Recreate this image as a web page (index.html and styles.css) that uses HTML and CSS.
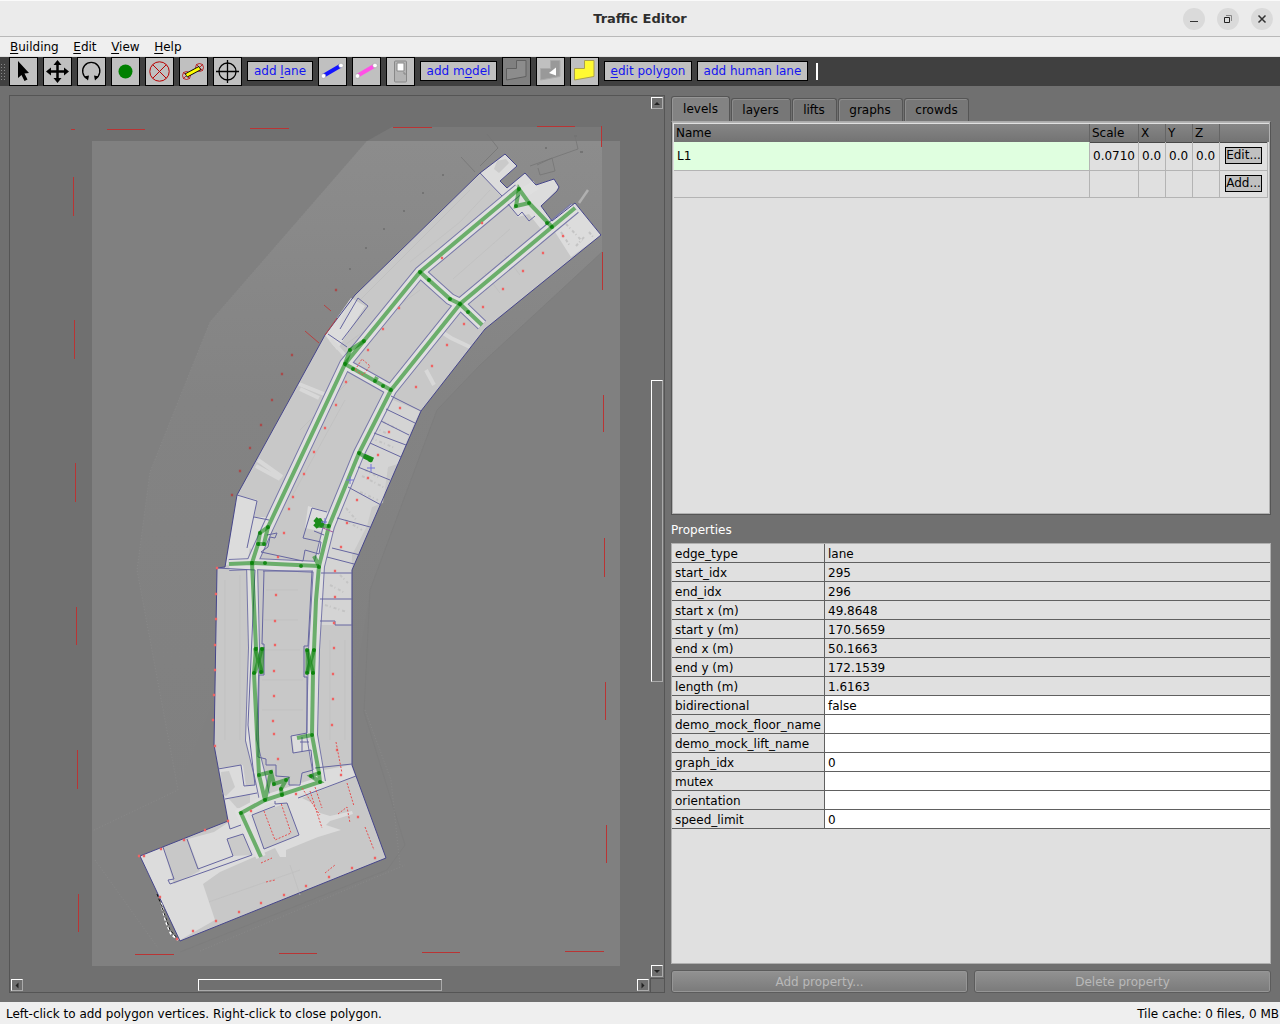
FILE: index.html
```html
<!DOCTYPE html>
<html lang="en">
<head>
<meta charset="utf-8">
<title>Traffic Editor</title>
<link rel="stylesheet" href="styles.css">
</head>
<body>
<header class="titlebar">
  <h1>Traffic Editor</h1>
  <div class="winbtns">
    <span><svg width="22" height="22"><path d="M7 13.5h8" stroke="#333"/></svg></span>
    <span><svg width="22" height="22" fill="none"><path d="M7.5 9.500h5v5h-5z" stroke="#222"/><path d="M9 7.500h5.500v5.500" stroke="#888"/></svg></span>
    <span><svg width="22" height="22"><path d="M7.500 7.500l7 7m0-7l-7 7" stroke="#333" stroke-width="1.500"/></svg></span>
  </div>
</header>
<nav class="menu"><span><u>B</u>uilding</span><span><u>E</u>dit</span><span><u>V</u>iew</span><span><u>H</u>elp</span></nav>
<div class="toolbar">
  <i class="grip"></i>
  <button class="tool"><svg viewBox="0 0 29 29"><path d="M9 4V21l3.500-3 3 6 3-1.500-3-6 4.500-.5z" fill="#000"/></svg></button>
  <button class="tool"><svg viewBox="0 0 29 29"><path d="M14.500 6v17M6 14.500h17" stroke="#000" stroke-width="2.500"/><path d="M14.500 3l4 5h-8zM14.500 26l4-5h-8zM3 14.500l5-4v8zM26 14.500l-5-4v8z"/></svg></button>
  <button class="tool"><svg viewBox="0 0 29 29"><path d="M10 21.500A8.600 8.600 0 1 1 18.500 21.500" fill="none" stroke="#000" stroke-width="1.300"/><path d="M7 19.500l5-1-1 5zM22 19.500l-5-1 1 5z"/></svg></button>
  <button class="tool"><svg viewBox="0 0 29 29"><circle cx="14.500" cy="14.500" r="7" fill="#008000"/></svg></button>
  <button class="tool"><svg viewBox="0 0 29 29" fill="none" stroke="#b80000"><circle cx="14.500" cy="14.500" r="9.700"/><path d="M7.700 7.700l13.600 13.600m0-13.600L7.700 21.300"/></svg></button>
  <button class="tool"><svg viewBox="0 0 29 29"><g fill="none" stroke="#b80000" stroke-width=".8"><circle cx="7.500" cy="18.500" r="4"/><circle cx="20.500" cy="10.500" r="4"/><path d="M4.500 15.500l6 6m0-6l-6 6M17.500 7.500l6 6m0-6l-6 6"/></g><path d="M7 18.500L21 11" stroke="#000" stroke-width="4.500"/><path d="M7.500 18.200L20.500 11.300" stroke="#ff0" stroke-width="3"/></svg></button>
  <button class="tool"><svg viewBox="0 0 29 29" fill="none" stroke="#000" stroke-width="1.300"><circle cx="14.500" cy="14.500" r="8.500"/><path d="M14.500 3v23M3 14.500h23"/></svg></button>
  <button class="txt t1">add <u>l</u>ane</button>
  <button class="tool"><svg viewBox="0 0 29 29"><path d="M5 19L23 8.500" stroke="#1414ff" stroke-width="4"/><g fill="#fff" stroke="#999" stroke-width=".5"><circle cx="5.500" cy="19" r="2.300"/><circle cx="23" cy="8.500" r="2.300"/></g></svg></button>
  <button class="tool"><svg viewBox="0 0 29 29"><path d="M5 19L23 8.500" stroke="#ff50e6" stroke-width="4"/><g fill="#fff" stroke="#999" stroke-width=".5"><circle cx="5.500" cy="19" r="2.300"/><circle cx="23" cy="8.500" r="2.300"/></g></svg></button>
  <button class="tool"><svg viewBox="0 0 29 29" stroke="#888"><rect x="8.500" y="4" width="12" height="21" rx="1" fill="#b4b4b4"/><path d="M11 6h7v8h-7z" fill="#fff"/><path d="M17 16h2v2" fill="none"/></svg></button>
  <button class="txt t2">add m<u>o</u>del</button>
  <button class="tool on"><svg viewBox="0 0 29 29"><path d="M4.500 11.500h10v-8h9.500v16L4.500 23z" fill="#8c8c8c" stroke="#606060"/></svg></button>
  <button class="tool"><svg viewBox="0 0 29 29"><path d="M4.500 11.500h10v-8h9.500v16L4.500 23z" fill="#999" stroke="#aaa"/><path d="M13 16l7-5.500v8z" fill="#fff"/></svg></button>
  <button class="tool"><svg viewBox="0 0 29 29"><path d="M4.500 11.500h10v-8h9.500v16L4.500 23z" fill="#fffa32" stroke="#aaa050"/></svg></button>
  <button class="txt t3"><u>e</u>dit polygon</button>
  <button class="txt t4">add human lane</button>
  <i class="caret"></i>
</div>
<main>
  <section class="view">
    <svg class="map" width="640" height="882" viewBox="10 96 640 882">
      <defs>
        <linearGradient id="shade" x1="0" y1="0" x2="0" y2="1"><stop offset="0" stop-color="#8c8c8c"/><stop offset=".4" stop-color="#838383"/><stop offset="1" stop-color="#808080"/></linearGradient>
      </defs>
      <path d="M92 141H620V966H92z" fill="#808080"/>
      <path class="site" d="M367 141L392 127H602V141z"/>
      <path fill="url(#shade)" d="M367 141H602V252L480 365 437 410 370 590 352 700 214 700 178 790 137 570 150 472 210 322z"/>
      <path d="M602 252L480 365 437 410 370 590 364 712 405 845 387 870 180 952" fill="none" stroke="#7b7b7b" stroke-width=".6"/>
      <path d="M367 141L210 322 150 472 137 570 178 790 92 831M95 860L158 948M200 951L405 865M365 710L391 780 400 865" fill="none" stroke="#8c8c8c" stroke-width=".7" stroke-dasharray="1 2"/>
      <path d="M461 157L475 172M487 134L498 148 480 166M530 166L578 149 575 136M537 165L552 158 555 171 540 175 538 168" fill="none" stroke="#757575" stroke-width=".8"/>
      <path d="M574 136h3M580 152h3M545 148h2M442 175h2M422 193h2M403 211h2M383 229h2M365 248h2M349 269h2" stroke="#747474" stroke-width="2"/>
      <path d="M579 203L588 190" stroke="#b0b0b0" stroke-width="2.500"/>
      <path class="hall" d="M505 154L517 166 500 181 507 188 525 173 536 185 554 179 559 187 557 191 541 206 552 221 575 203 601 235 485 329 421 411 352 570V765L386 858 180 941 140 856 228 821 214 745 217 568 225 567 237 495 325 335 355 295 480 173z"/>
      <g class="faint"><path d="M470 190L360 300M410 262L460 222 490 190M453 279L510 229M505 255L520 275M485 273L500 293M225 580V740M240 575V740M266 590H298M264 620H298M263 650H300M262 680H303M262 710H303M330 640V740M345 640V740M345 345L420 290M300 430L350 380M290 500L345 400M200 905L300 870M290 865L300 895"/></g>
      <g class="light">
        <path d="M505 154L517 166 500 181 507 188 525 173 536 185 554 179 559 187 541 206 552 221 575 203 601 235 571 257 555 232 540 228 529 214 518 217 510 205 502 197 481 173z"/>
        <path d="M393 400L420 411 409 435 398 464 388 467 383 503 372 507 367 526 352 555 351 625H321L322 570 328 548 350 487 362 453z" opacity=".6"/>
        <path d="M351 298L365 306 337 350 325 335zM237 495L257 500 248 560 226 565zM308 506L329 512 323 532 305 528zM254 517L269 517 262 552 246 547zM292 736L311 735 312 750 294 753z"/>
        <path d="M219 768L243 765 246 786 258 784 266 800 320 782 313 772 351 765 355 776 302 798 314 804 320 813 330 816 352 811 353 814 330 821 326 825 341 830 318 837 286 850 286 857 280 857 275 848 220 872 203 884 215 920 180 940 140 856 163 847 174 884 200 871 188 839 214 832 229 822z"/>
      </g>
      <path d="M252 815L287 803 299 835 264 849zM227 839L243 834 252 855 233 856zM497 161L506 159 509 163 499 173 494 169zM221 772L229 771 235 787 226 796 222 794zM229 799L250 794 250 809 237 808z" fill="#cacaca"/>
      <g class="shadow"><path d="M299 384L324 394M300 389L319 398M258 460L282 477M256 466L280 479M426 370L434 385M437 329L451 338 470 347M331 340L350 361M341 326L351 301"/></g>
      <g class="clutter"><path d="M566 224L582 241M561 232L570 246M576 246L585 236M589 232L594 238M365 470L380 478M371 438L395 448M375 418L400 430M360 492L378 500M345 520L362 530M346 508L357 521M330 585L345 593M325 605L347 612M340 575L348 583M375 428L388 434M362 476L385 488"/></g>
      <g class="walls">
        <path d="M519 189L420 272 345 364 268 527 252 563 254 648 251 740 260 776 265 800"/>
        <path d="M575 208L552 227 460 304 391 390 359 453 329 526 319 566 314 650 312 735 320 782"/>
        <path d="M420 272L450 299 460 304 482 325M345 364L391 390M229 565L252 564 319 567"/>
      </g>
      <g class="floor">
        <path d="M519 189L420 272 345 364 268 527 252 563 254 648 251 740 260 776 265 800"/>
        <path d="M575 208L552 227 460 304 391 390 359 453 329 526 319 566 314 650 312 735 320 782 265 800 241 813 261 857"/>
        <path d="M420 272L450 299 460 304 482 325M345 364L391 390M229 565L252 564 319 567M536 185L520 195"/>
      </g>
      <g class="line outer"><path d="M505 154L517 166 500 181 507 188 525 173 536 185 554 179 559 187 557 191 541 206 552 221 575 203 601 235 485 329 421 411 352 570V765L386 858 180 941 140 856 228 821 214 745 217 568 225 567 237 495 325 335 355 295 480 173z"/></g>
      <g class="line">
        <path d="M480 173L502 196M508 204L518 216 522 212 529 221 535 216M340 329L358 298 368 306 342 340M328 334L347 347M391 396L421 411M386 409L415 423M381 421L409 435M374 433L406 445M370 443L401 457M358 467L390 480M348 487L381 505M337 518L370 527M332 548L360 555M327 557L354 564M321 573H352M320 599H352M320 621H335V625H352"/>
        <path d="M237 495L257 501 247 548M254 517L269 520M267 535L277 533 275 538 270 537 268 547 261 552 303 561 305 550 319 554 321 542 303 538 312 508 327 512M314 531L324 535M216 568L255 570 248 725 255 785 244 786 241 765 218 769M263 571H313M264 571L262 644H264V675H259L258 757 266 759V765H276V776L289 777V785H300L302 773 313 770 311 750 293 753 291 736 307 733V677H304V646H308L312 571"/>
        <path d="M302 737V752M300 742H309M225 799L257 793M228 821L230 829 241 825M163 847L174 879 168 880 170 884 252 855 243 834 227 839 233 856 198 869 187 839M252 815L264 849 299 835 287 803 275 804 275 801M252 815L275 806M298 798L356 776M315 768L352 764"/>
      </g>
      <path d="M161 903L166 922 171 934 178 940" stroke="#fff" stroke-width="2" fill="none" stroke-dasharray="3 2"/>
      <path d="M157 894L163 910 170 930 178 939" stroke="#111" fill="none" stroke-dasharray="3 2"/>
      <g class="lanes">
        <path d="M519 189L420 272 345 364 268 527 260 533 258 544 252 563 256 648M254 673L259 775 271 772 274 784 286 780 281 789 282 795M259 775L265 800 271 772"/>
        <path d="M575 208L552 227 460 304 391 390 359 453 329 526 319 566 316 600 314 650M313 673L312 735 319 773 311 776 320 782 265 800 241 813 261 857M312 735L297 738M319 773L320 782M319 566L314 556"/>
        <path d="M552 227L529 203 519 189 516 206 529 203M420 272L450 299 460 304 482 325M345 364L375 381 391 390M364 341L350 350 345 364M229 564L252 563 319 566M268 527L264 544H258M359 453L372 461M329 526H317M375 381L377 377"/>
        <path d="M256 647L254 674M262.500 647L261.500 674M307.500 649V674M314 649L313 674"/><path d="M255 648L262 673"/><path d="M262 648L255 673"/><path d="M307 650L313 673"/><path d="M314 650L307 673"/>
      </g>
      <path class="nodes" d="M519 189h0M516 206h0M529 203h0M552 227h0M547 223h0M420 272h0M429 280h0M450 299h0M460 304h0M468 312h0M364 341h0M350 350h0M345 364h0M375 381h0M383 386h0M391 390h0M353 369h0M359 453h0M366 457h0M370 460h0M317 522h0M320 520h0M321 525h0M329 526h0M268 527h0M260 533h0M258 544h0M264 544h0M252 563h0M265 563h0M301 566h0M319 567h0M256 649h0M262 649h0M261 672h0M254 673h0M307 650h0M314 650h0M307 673h0M313 673h0M312 735h0M259 775h0M271 772h0M274 784h0M286 780h0M281 789h0M282 795h0M265 800h0M320 782h0M319 773h0M311 776h0M241 813h0"/>
      <path d="M364 456L373 460M315 519L323 526M315 527L322 520" stroke="#1c8c1c" stroke-width="5"/>
      <path d="M371 464v8M367 468h8M350 476v8M346 480h8M325 518v6M321 522h6" stroke="#7272d8"/>
      <path d="M323 528L333 532" stroke="#a35a9a"/>
      <path class="dots" d="M563 236h0M543 253h0M523 271h0M503 289h0M483 307h0M482 223h0M442 258h0M399 308h0M383 329h0M368 350h0M464 324h0M447 345h0M432 366h0M416 387h0M400 408h0M389 432h0M378 455h0M368 478h0M336 405h0M325 428h0M314 452h0M304 474h0M293 497h0M289 509h0M284 533h0M347 523h0M341 547h0M335 571h0M335 597h0M334 623h0M346 382h0M357 500h0M278 557h0M276 595h0M275 621h0M275 645h0M274 671h0M274 696h0M273 721h0M274 734h0M278 759h0M334 648h0M333 674h0M333 699h0M332 725h0M337 750h0M341 775h0M217 568h0M216 594h0M216 619h0M215 645h0M215 670h0M214 695h0M213 720h0M215 746h0"/>
      <path class="dots far" d="M336 290h0M292 355h0M282 374h0M272 400h0M261 425h0M250 448h0M240 471h0M232 495h0"/>
      <path class="dots" d="M228 821h0M205 830h0M184 840h0M161 849h0M144 856h0M139 856h0M160 897h0M193 931h0M216 921h0M239 912h0M261 903h0M284 895h0M306 886h0M329 877h0M352 868h0M375 858h0M251 811h0M296 794h0M358 817h0M177 939h0"/>
      <path d="M305 331L319 343M324 305L331 311M337 318L325 335" fill="none" stroke="#b84040"/>
      <path class="trace" d="M355 370L362 359 370 366 363 375zM264 811L275 840 291 833 281 803M302 788L320 815M315 787L322 808M347 783L354 806M365 827L374 850M336 742L342 773M266 882L275 880M310 791L322 828M338 814L347 807 350 823M261 863L272 858M325 873L335 865"/>
      <path class="marks" d="M107 129.500h38M250 128.500h39M393 127.500h39M537 126.500h38M71 129.500h4M135 954.500h39M279 953.500h38M422 952.500h38M565 951.500h39M601.500 126v21M602.500 252v38M603.500 395v37M604.500 538v39M605.500 682v38M606.500 825v38M73.500 177v39M74.500 320v39M75.500 463v39M76.500 607v38M77.500 750v39M78.500 894v38"/>
    </svg>
    <div class="vbar"><b class="arrow up"></b><i></i><b class="arrow down"></b></div>
    <div class="hbar"><b class="arrow left"></b><i></i><b class="arrow right"></b></div>
    <div class="corner"></div>
  </section>
  <aside>
    <div class="tabs"><span class="active">levels</span><span class="w2">layers</span><span class="w3">lifts</span><span class="w4">graphs</span><span class="w5">crowds</span></div>
    <div class="levels">
      <div class="row head"><span>Name</span><span>Scale</span><span>X</span><span>Y</span><span>Z</span><span></span></div>
      <div class="row"><span class="picked">L1</span><span>0.0710</span><span>0.0</span><span>0.0</span><span>0.0</span><span class="act"><button>Edit...</button></span></div>
      <div class="row"><span></span><span></span><span></span><span></span><span></span><span class="act"><button>Add...</button></span></div>
    </div>
    <h2>Properties</h2>
    <div class="props">
      <dl>
        <dt>edge_type</dt><dd>lane</dd><dt>start_idx</dt><dd>295</dd><dt>end_idx</dt><dd>296</dd>
        <dt>start x (m)</dt><dd>49.8648</dd><dt>start y (m)</dt><dd>170.5659</dd><dt>end x (m)</dt><dd>50.1663</dd>
        <dt>end y (m)</dt><dd>172.1539</dd><dt>length (m)</dt><dd>1.6163</dd>
        <dt>bidirectional</dt><dd class="edit">false</dd><dt>demo_mock_floor_name</dt><dd class="edit"></dd><dt>demo_mock_lift_name</dt><dd class="edit"></dd>
        <dt>graph_idx</dt><dd class="edit">0</dd><dt>mutex</dt><dd class="edit"></dd><dt>orientation</dt><dd class="edit"></dd><dt>speed_limit</dt><dd class="edit">0</dd>
      </dl>
    </div>
    <div class="actions"><button>Add property...</button><button>Delete property</button></div>
  </aside>
</main>
<footer><span>Left-click to add polygon vertices. Right-click to close polygon.</span><span>Tile cache: 0 files, 0 MB</span></footer>
</body>
</html>
```
FILE: styles.css
```css
* { box-sizing: border-box; }
body { margin: 0; width: 1280px; height: 1024px; overflow: hidden; background: #707070; font: 12px/14px "DejaVu Sans", sans-serif; color: #000; display: flex; flex-direction: column; }
button { font: inherit; padding: 0; margin: 0; border-radius: 0; }
u { text-decoration: underline; text-underline-offset: 2px; text-decoration-skip-ink: none; }
.titlebar { height: 37px; flex: none; display: grid; grid-template-columns: 1fr auto 1fr; align-items: center; background: #ebebeb; border-top: 1px solid #fafafa; border-bottom: 1px solid #b9b9b9; }
.titlebar h1 { grid-column: 2; margin: 0; font-size: 13px; color: #2e2e2e; }
.winbtns { display: flex; gap: 12px; justify-content: flex-end; padding-right: 7px; }
.winbtns span { width: 22px; height: 22px; border-radius: 50%; background: #dadada; }
.winbtns svg { display: block; }
.menu { height: 20px; flex: none; display: flex; gap: 14.6px; padding: 3px 10px; background: #efefef; border-bottom: 1px solid #e0e0e0; }
.toolbar { height: 29px; flex: none; display: flex; align-items: flex-start; gap: 5px; background: #404040; }
.grip { width: 6px; height: 17px; margin: 6px -2px 0 0; background: radial-gradient(#888 0.8px, transparent 1px) 0 0 / 3px 3px; }
.tool { width: 29px; height: 29px; flex: none; border: 1px solid #000; background: #c0c0c0; }
.tool svg { display: block; width: 29px; height: 29px; margin: -1px; }
.tool.on { background: #808080; }
.txt { height: 20px; flex: none; margin-top: 4px; border: 1px solid #000; background: #c0c0c0; color: #1414f0; line-height: 18px; white-space: nowrap; }
.t1 { width: 66px; } .t2 { width: 77px; } .t3 { width: 88px; } .t4 { width: 111px; }
.caret { width: 2px; height: 17px; background: #fff; margin: 6px 0 0 3px; }
main { height: 916px; flex: none; display: flex; gap: 6px; padding: 9px 9px 10px; }
.view { width: 656px; height: 898px; flex: none; display: grid; grid-template: 882px 14px / 640px 14px; border: 1px solid #555; }
.map { display: block; }
.site { fill: #797979; }
.hall { fill: #c8c8c8; }
.faint { fill: none; stroke: #bfbfbf; stroke-width: .7; }
.light { fill: #dcdcdc; }
.shadow { fill: none; stroke: #d8d8d8; stroke-width: 4; }
.clutter { fill: none; stroke: #c4c4c4; stroke-width: 2; stroke-dasharray: 3 2 1 3; }
.walls, .floor, .line, .lanes { fill: none; }
.walls { stroke: #7777a8; stroke-width: 12; }
.floor { stroke: #dfdfdf; stroke-width: 10; }
.line { stroke: #6666a0; stroke-width: 1; }
.outer { stroke: #45458a; }
.lanes { stroke: rgba(0, 128, 0, .52); stroke-width: 4; }
.nodes { stroke: rgba(0, 128, 0, .8); stroke-width: 4; stroke-linecap: round; }
.dots { stroke: #ef6363; stroke-width: 2.3; stroke-linecap: square; }
.far { stroke: #a84a4a; }
.trace { fill: none; stroke: #e65050; stroke-dasharray: 2 1.5; }
.marks { stroke: #b93434; }
.vbar { display: flex; flex-direction: column; padding: 1px 0 0 1px; }
.vbar i { width: 12px; height: 302px; margin-top: 271px; margin-bottom: 283px; }
.hbar { display: flex; padding: 1px 0 0 1px; }
.hbar i { width: 244px; height: 12px; margin-left: 175px; margin-right: 195px; }
.vbar i, .hbar i, .arrow { border: 1px solid; border-color: #fff #aaa #aaa #fff; flex: none; }
.arrow { width: 12px; height: 12px; display: grid; place-items: center; }
.arrow::before { content: ""; border: 3px solid transparent; border-top-width: 0; border-bottom: 3px solid #222; }
.down::before { transform: rotate(180deg); }
.left::before { transform: rotate(-90deg); }
.right::before { transform: rotate(90deg); }
.corner { border-left: 1px solid #555; border-top: 1px solid #555; }
aside { width: 600px; flex: none; display: flex; flex-direction: column; }
.tabs { height: 26px; flex: none; display: flex; align-items: flex-end; gap: 1px; padding-top: 1px; }
.tabs span { height: 23px; text-align: center; line-height: 22px; border: 1px solid #555; border-bottom: 0; border-radius: 3px 3px 0 0; background: #777; box-shadow: inset 1px 1px #8b8b8b; padding-right: 1px; }
.tabs .active { width: 59px; height: 25px; line-height: 24px; background: #838383; box-shadow: inset 1px 1px #969696; padding-right: 0; }
.tabs .w2 { width: 60px; } .tabs .w3 { width: 45px; } .tabs .w4 { width: 65px; } .tabs .w5 { width: 65px; padding-right: 0; }
.levels { height: 394px; flex: none; border: 1px solid #555; border-top-color: #aaa; outline: 1px solid #b2b2b2; outline-offset: -2px; padding: 2px; background: #e0e0e0; background-clip: padding-box; }
.row { display: grid; grid-template-columns: 416px 49px 27px 27px 27px 48px; height: 28px; width: 594px; }
.row span { border-right: 1px solid #b4b4b4; border-bottom: 1px solid #b4b4b4; padding-left: 3px; line-height: 28px; }
.row .picked { background: #e0ffe0; }
.row.head { height: 18px; background: linear-gradient(#868686, #737373); width: 595px; }
.row.head span { border-color: #999; border-right-color: #656565; border-bottom-color: #484848; padding-left: 2px; line-height: 18px; }
.row.head span:last-child { border-right: 0; }
.row .act { padding: 5px 4px 0 5px; line-height: 15px; }
.act button { display: block; width: 37px; height: 17px; border: 1px solid #000; background: #c0c0c0; white-space: nowrap; line-height: 15px; }
h2 { font: inherit; color: #fff; margin: 8px 0 7px; height: 13px; flex: none; }
.props { height: 421px; flex: none; background: #e0e0e0; border: 1px solid #b0b0b0; }
dl { margin: 0; display: grid; grid-template-columns: 153px 1fr; grid-auto-rows: 19px; }
dt, dd { margin: 0; padding-left: 3px; line-height: 20px; border-bottom: 1px solid #606060; white-space: nowrap; }
dt { border-right: 1px solid #606060; }
.edit { background: #fff; }
.actions { display: flex; gap: 6px; margin-top: 6px; }
.actions button { width: 297px; height: 23px; border: 1px solid #5c5c5c; border-radius: 3px; background: linear-gradient(#929292, #7a7a7a); box-shadow: inset 0 0 0 1px #969696; color: #b9b9b9; }
footer { height: 22px; flex: none; display: flex; justify-content: space-between; background: #efefef; padding: 5px 1px 0 6px; white-space: nowrap; }
```
